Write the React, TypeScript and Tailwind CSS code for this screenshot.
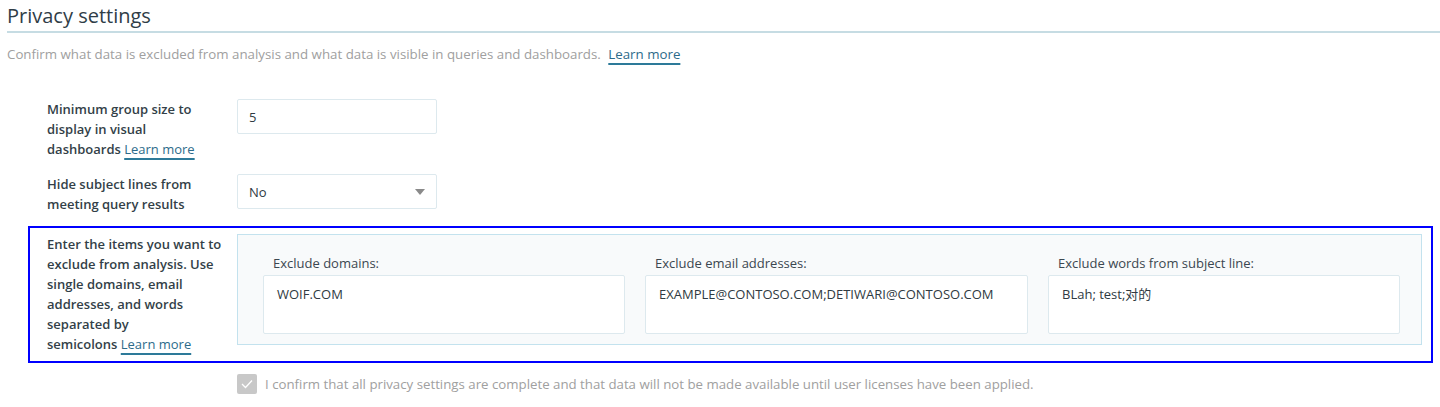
import { useState } from "react";

const font = "font-['Open_Sans','Noto_Sans_CJK_SC',sans-serif]";

function LearnMore() {
  return (
    <a
      href="#"
      className="font-normal text-[#2d6b8a] underline decoration-[#2d7a99] decoration-[1.5px] underline-offset-[4px]"
    >
      Learn more
    </a>
  );
}

function Field({ label, value, width }: { label: string; value: string; width: string }) {
  return (
    <div className={`flex flex-col ${width}`}>
      <label className="pl-[10px] text-[13px] leading-[20px] text-[#3b4750]">{label}</label>
      <div className="mt-[2px] h-[59px] rounded-[2px] border border-[#dde9ee] bg-white px-[13px] pt-[8px] text-[13px] leading-[20px] text-[#2f3a42]">
        {value}
      </div>
    </div>
  );
}

export default function App() {
  const [confirmed] = useState(true);

  return (
    <div className={`${font} min-h-screen bg-white pl-[7px] pt-[2px]`}>
      <h1 className="text-[20px] leading-[28px] text-[#2f3d47]">Privacy settings</h1>
      <div className="mt-[1px] h-[2px] bg-[#c6dce3]" />

      <p className="mt-[11px] text-[13.3px] leading-[20px] text-[#a0a0a0]">
        Confirm what data is excluded from analysis and what data is visible in queries and dashboards.{" "}
        <span className="ml-[4px]">
          <LearnMore />
        </span>
      </p>

      <div className="mt-[35px] flex flex-col text-[13px] leading-[20px]">
        <div className="flex pl-[40px]">
          <div className="w-[190px] pr-[12px] font-semibold text-[#333f48]">
            Minimum group size to
            <br />
            display in visual
            <br />
            dashboards <LearnMore />
          </div>
          <div className="flex h-[35px] w-[200px] items-center rounded-[2px] border border-[#dde9ee] px-[11px] text-[#2f3a42]">
            5
          </div>
        </div>

        <div className="mt-[15px] flex pl-[40px]">
          <div className="w-[190px] pr-[12px] font-semibold text-[#333f48]">
            Hide subject lines from
            <br />
            meeting query results
          </div>
          <div className="flex h-[35px] w-[200px] items-center justify-between rounded-[2px] border border-[#dde9ee] pl-[11px] pr-[11px] text-[#2f3a42]">
            <span>No</span>
            <svg width="10" height="6" viewBox="0 0 10 6">
              <path d="M0 0h10L5 6z" fill="#8a8a8a" />
            </svg>
          </div>
        </div>

        <div className="ml-[21px] mt-[12px] mr-[7px] flex border-2 border-[#0000ff] pb-[7px] pl-[17px] pr-[9px] pt-[6px]">
          <div className="w-[190px] shrink-0 pr-[12px] font-semibold text-[#333f48]">
            Enter the items you want to
            <br />
            exclude from analysis. Use
            <br />
            single domains, email
            <br />
            addresses, and words
            <br />
            separated by
            <br />
            semicolons <LearnMore />
          </div>
          <div className="flex h-[111px] flex-1 gap-[20px] border border-[#c3e2ee] bg-[#f8fafb] pl-[25px] pr-[19px] pt-[18px]">
            <Field label="Exclude domains:" value="WOIF.COM" width="w-[362px]" />
            <Field
              label="Exclude email addresses:"
              value="EXAMPLE@CONTOSO.COM;DETIWARI@CONTOSO.COM"
              width="w-[383px]"
            />
            <Field label="Exclude words from subject line:" value="BLah; test;对的" width="w-[352px]" />
          </div>
        </div>

        <div className="mt-[11px] flex items-center pl-[230px]">
          <span className="flex h-[20px] w-[20px] items-center justify-center rounded-[2px] bg-[#c8c8c8]">
            {confirmed && (
              <svg width="12" height="10" viewBox="0 0 12 10">
                <path d="M1 5l3.5 3.5L11 1.5" fill="none" stroke="#fff" strokeWidth="1.3" />
              </svg>
            )}
          </span>
          <span className="ml-[8px] text-[13.25px] text-[#a0a0a0]">
            I confirm that all privacy settings are complete and that data will not be made available until user
            licenses have been applied.
          </span>
        </div>
      </div>
    </div>
  );
}
